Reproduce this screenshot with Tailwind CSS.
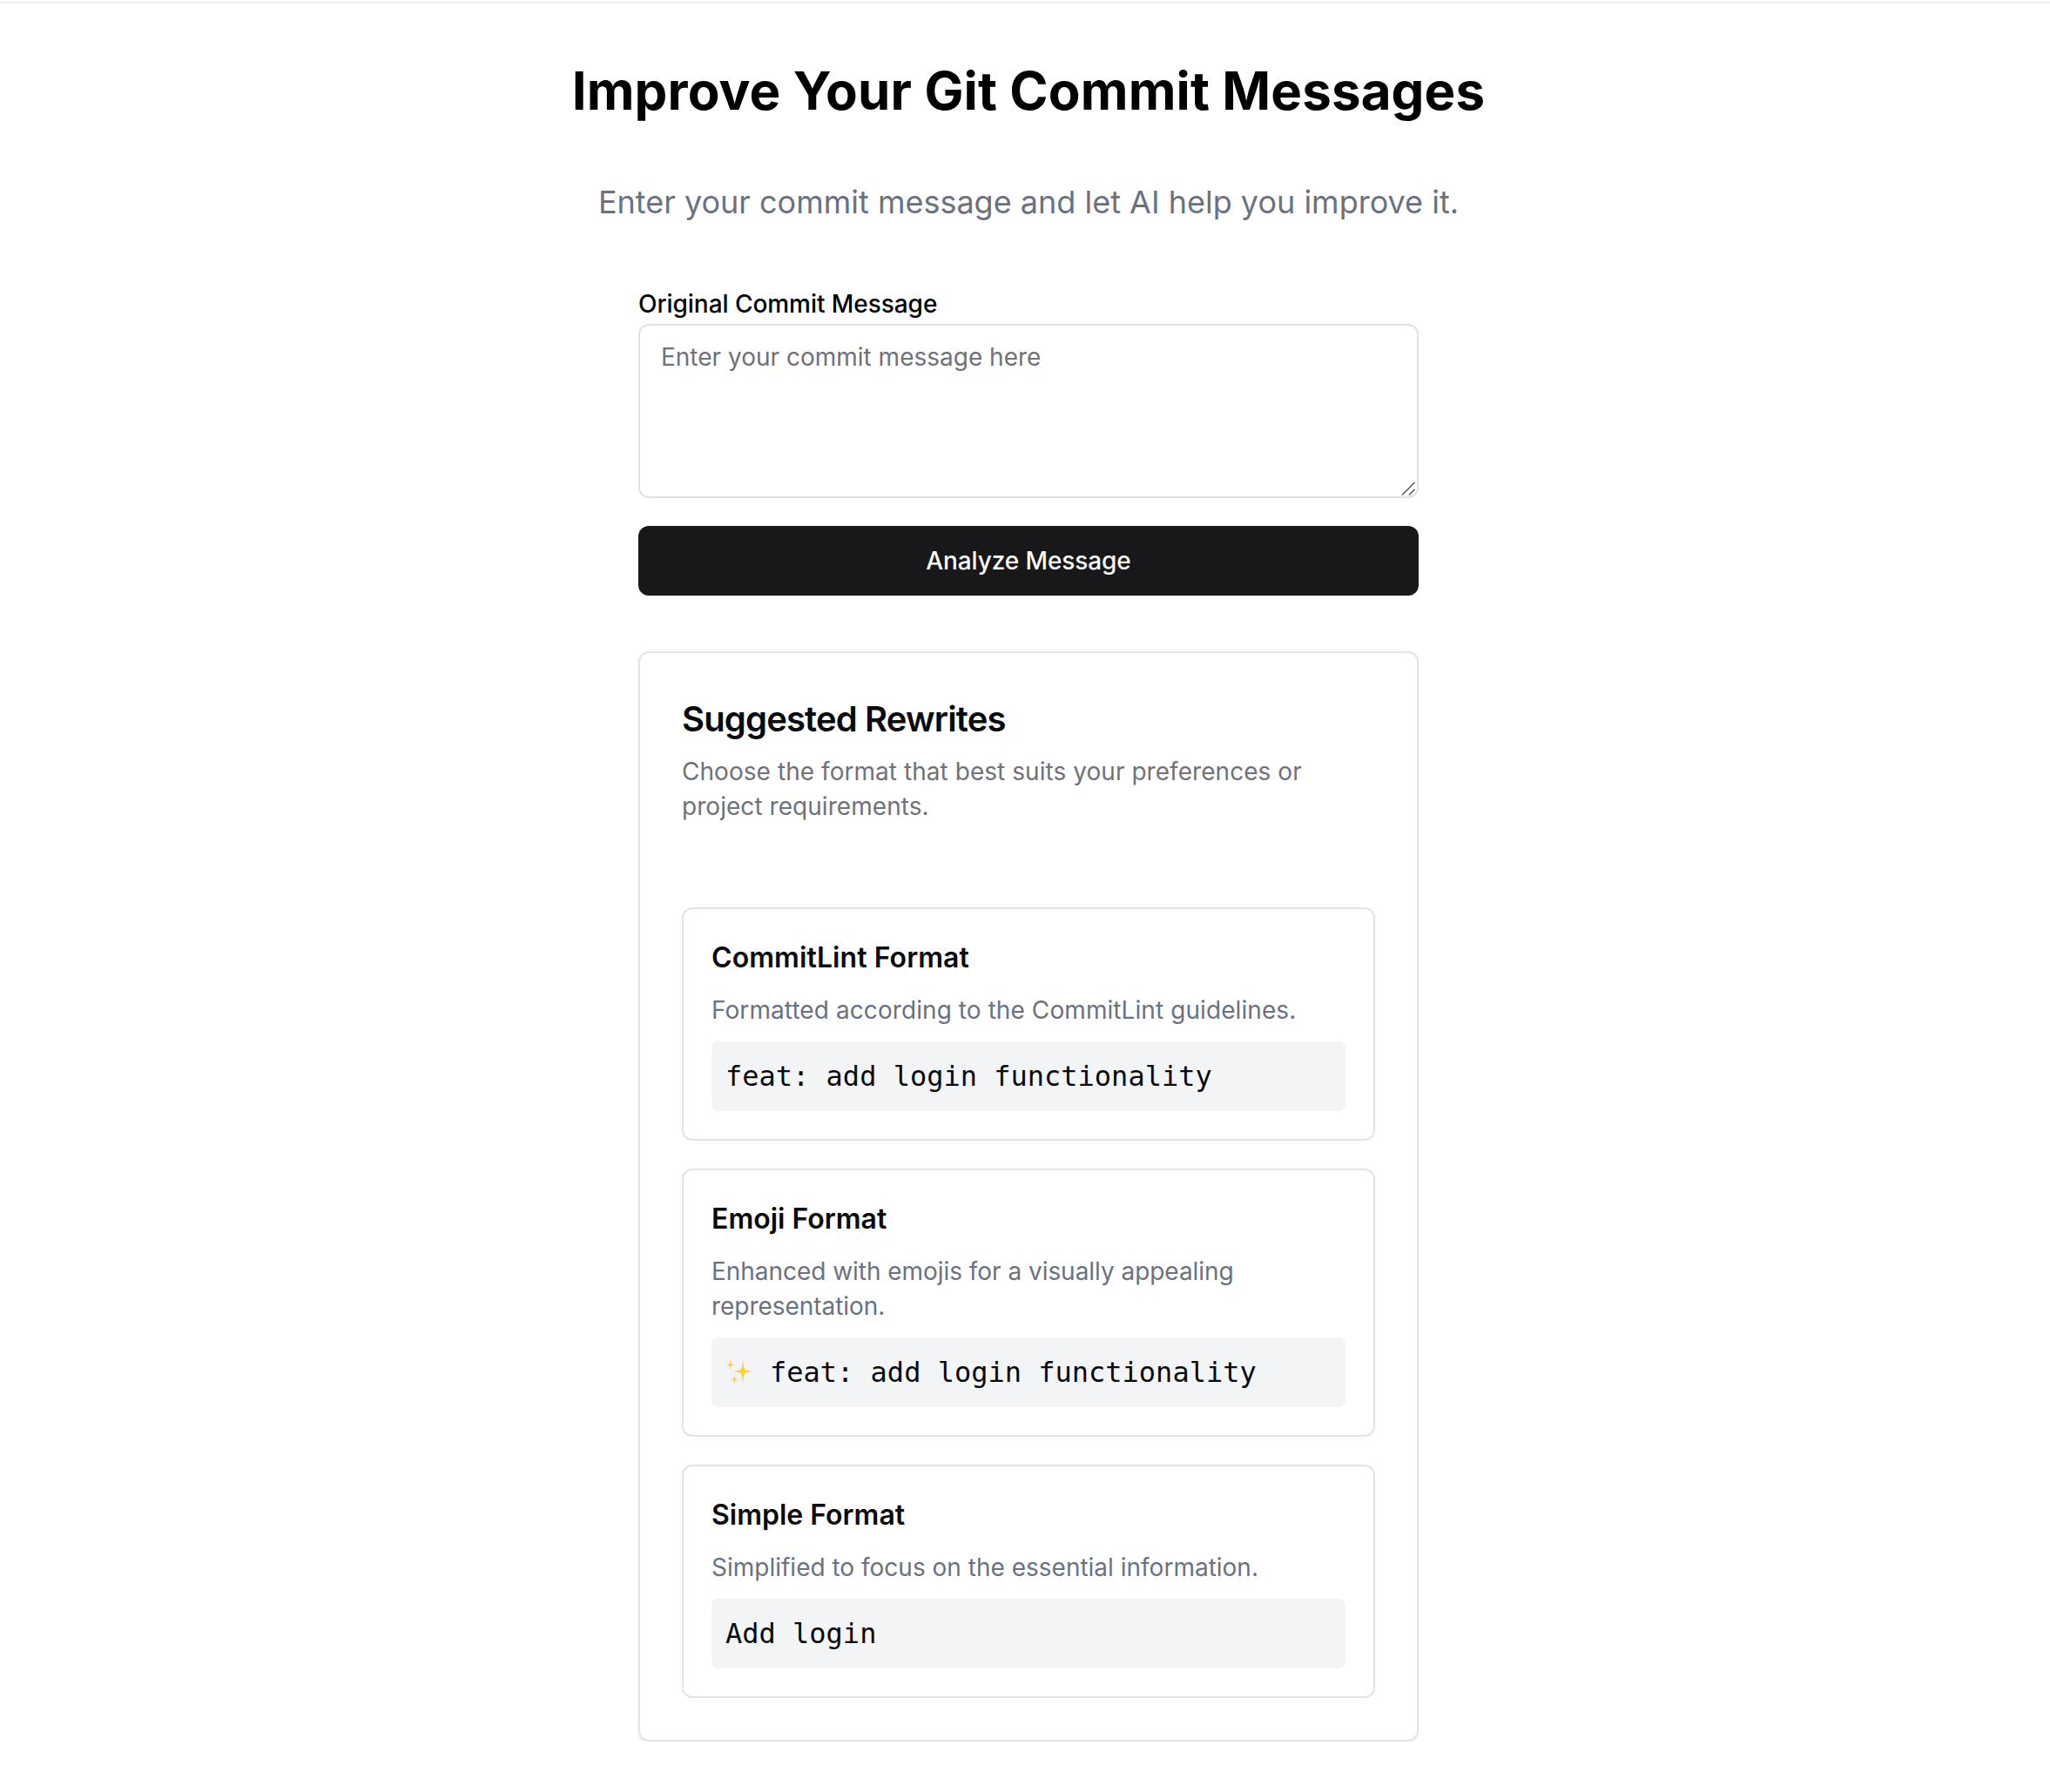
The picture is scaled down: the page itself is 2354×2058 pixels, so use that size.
<!DOCTYPE html>
<html lang="en">
<head>
<meta charset="utf-8">
<title>Improve Your Git Commit Messages</title>
<script src="https://cdn.jsdelivr.net/npm/@tailwindcss/browser@4"></script>
</head>
<body class="bg-white font-['Inter',sans-serif] text-black antialiased">
<div class="h-1 border-b-2 border-[#f0f0f0] bg-[#fafafa]"></div>
<main class="flex flex-col items-center pt-16 pl-2">
  <h1 class="text-[60px] leading-[72px] font-bold tracking-[0.12px] whitespace-nowrap">Improve Your Git Commit Messages</h1>
  <p class="mt-16 text-4xl leading-14 text-gray-500 whitespace-nowrap">Enter your commit message and let AI help you improve it.</p>
  <form class="mt-16 flex w-[896px] flex-col">
    <label for="msg" class="h-12 pt-px text-[28px] leading-12 font-medium tracking-[-0.05px]">Original Commit Message</label>
    <div class="relative h-[200px]">
      <textarea id="msg" class="block h-full w-full resize-none rounded-xl border-2 border-[#e2e2e2] bg-white px-6 py-4 text-[28px] leading-10 placeholder:text-[#71717a]" placeholder="Enter your commit message here"></textarea>
      <svg class="absolute right-1 bottom-[3px]" width="16" height="16" viewBox="0 0 16 16" fill="none" stroke="#555" stroke-width="1.5"><path d="M1 15.5 15.5 1M9 15.5 15.5 9"/></svg>
    </div>
    <button type="button" class="mt-8 h-20 rounded-xl bg-[#18181b] text-[28px] leading-10 font-medium tracking-[-0.1px] text-[#fafafa]">Analyze Message</button>
  </form>
  <section class="mt-16 w-[896px] rounded-xl border-2 border-[#e4e4e7] bg-white p-12 text-[#09090b] shadow-[0_2px_4px_rgba(0,0,0,0.05)]">
    <h2 class="text-[40px] leading-14 font-semibold tracking-[-0.85px]">Suggested Rewrites</h2>
    <p class="mt-3 text-[28px] leading-10 tracking-[0.05px] text-[#71717a]">Choose the format that best suits your preferences or project requirements.</p>
    <div class="mt-24 flex flex-col gap-8">
      <article class="rounded-xl border-2 border-[#e4e4e7] p-8">
        <h3 class="text-[32px] leading-12 font-semibold tracking-[0.08px]">CommitLint Format</h3>
        <p class="mt-4 text-[28px] leading-10 tracking-[0.08px] text-gray-500">Formatted according to the CommitLint guidelines.</p>
        <pre class="mt-4 rounded-lg bg-gray-100 p-4 font-['DejaVu_Sans_Mono',monospace] text-[32px] leading-12">feat: add login functionality</pre>
      </article>
      <article class="rounded-xl border-2 border-[#e4e4e7] p-8">
        <h3 class="text-[32px] leading-12 font-semibold">Emoji Format</h3>
        <p class="mt-4 text-[28px] leading-10 tracking-[-0.04px] text-gray-500">Enhanced with emojis for a visually appealing representation.</p>
        <div class="mt-4 flex rounded-lg bg-gray-100 p-4 font-['DejaVu_Sans_Mono',monospace] text-[32px] leading-12">
          <svg class="shrink-0" width="32" height="48" viewBox="0 0 32 48" role="img" aria-label="sparkles">
            <defs><radialGradient id="g"><stop offset="0" stop-color="#ffdc26"/><stop offset=".4" stop-color="#fdcb45"/><stop offset="1" stop-color="#f3a572"/></radialGradient></defs>
            <g fill="url(#g)">
              <path d="M20 9.500Q20.600 19 22.500 20.800Q24.500 22.300 31.200 22.800Q24.500 23.400 22.500 25.200Q20.600 27 20 36.500Q19.400 27 17.500 25.200Q15.500 23.400 9 22.800Q15.500 22.300 17.500 20.800Q19.400 19 20 9.500Z"/>
              <path d="M5.700 8.800Q6 13.200 6.900 14.200Q7.700 15.100 9.700 15.400Q7.700 15.700 6.900 16.600Q6 17.600 5.700 22.200Q5.400 17.600 4.500 16.600Q3.700 15.700 1.500 15.400Q3.700 15.100 4.500 14.200Q5.400 13.200 5.700 8.800Z"/>
              <path d="M10.300 25.500Q10.600 29.900 11.500 30.900Q12.300 31.800 14.300 32Q12.300 32.300 11.500 33.200Q10.600 34.200 10.300 38.500Q10 34.200 9.100 33.200Q8.300 32.300 6.100 32Q8.300 31.800 9.100 30.900Q10 29.900 10.300 25.500Z"/>
            </g>
          </svg>
          <pre class="pl-[19px] font-['DejaVu_Sans_Mono',monospace]">feat: add login functionality</pre>
        </div>
      </article>
      <article class="rounded-xl border-2 border-[#e4e4e7] p-8">
        <h3 class="text-[32px] leading-12 font-semibold">Simple Format</h3>
        <p class="mt-4 text-[28px] leading-10 text-gray-500">Simplified to focus on the essential information.</p>
        <pre class="mt-4 rounded-lg bg-gray-100 p-4 font-['DejaVu_Sans_Mono',monospace] text-[32px] leading-12">Add login</pre>
      </article>
    </div>
  </section>
</main>
</body>
</html>
